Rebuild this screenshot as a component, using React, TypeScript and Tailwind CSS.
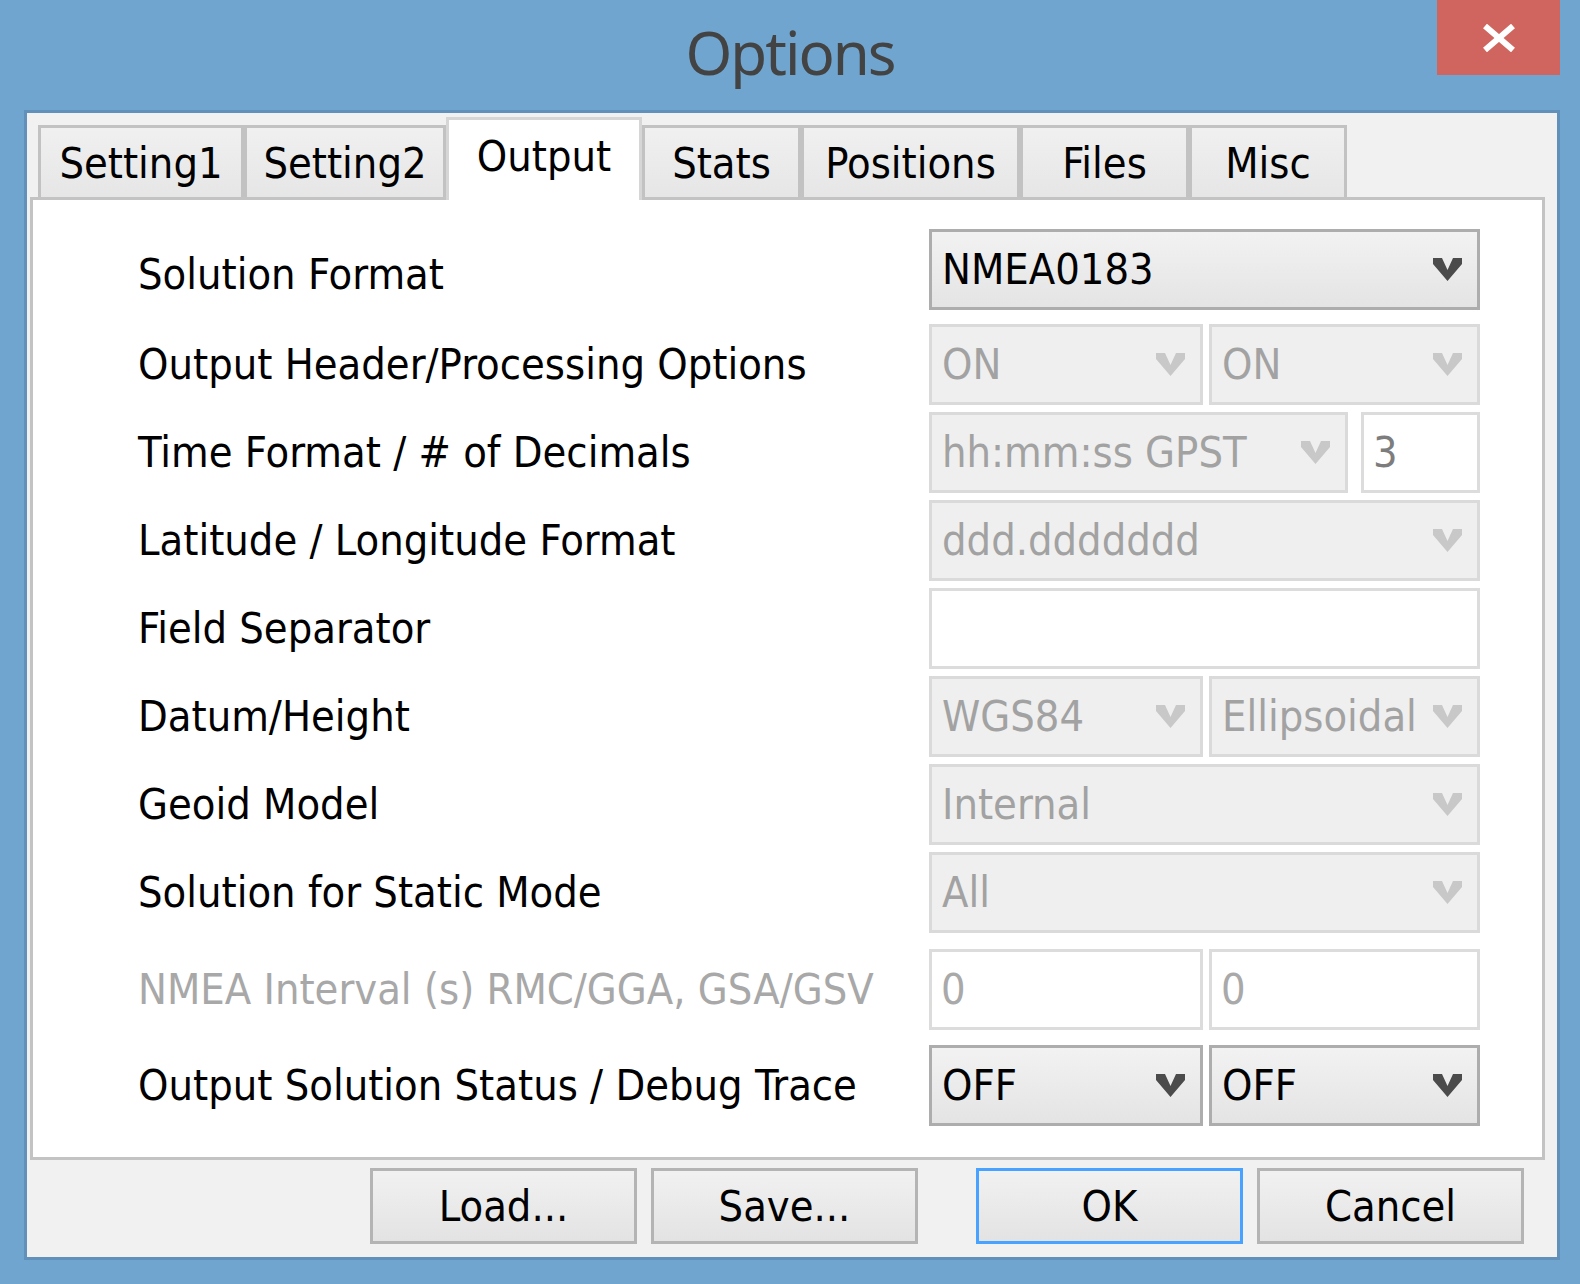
import clsx from 'clsx'

type Ctl =
  | { kind: 'combo'; value: string; enabled?: boolean; w: string }
  | { kind: 'edit'; value: string; w: string; muted?: boolean }

interface Row {
  label: string
  disabled?: boolean
  mt: string
  controls: Ctl[]
  gap?: string
  labelPad?: string
}

const tabs = [
  { label: 'Setting1', w: 'w-[206px]' },
  { label: 'Setting2', w: 'w-[202px]' },
  { label: 'Output', w: 'w-[196px]', active: true },
  { label: 'Stats', w: 'w-[159px]' },
  { label: 'Positions', w: 'w-[219px]' },
  { label: 'Files', w: 'w-[169px]' },
  { label: 'Misc', w: 'w-[158px]' },
]

const rows: Row[] = [
  {
    label: 'Solution Format',
    mt: 'mt-0',
    labelPad: 'pt-[10px]',
    controls: [{ kind: 'combo', value: 'NMEA0183', enabled: true, w: 'w-full' }],
  },
  {
    label: 'Output Header/Processing Options',
    mt: 'mt-[14px]',
    gap: 'gap-[6px]',
    controls: [
      { kind: 'combo', value: 'ON', w: 'w-[274px]' },
      { kind: 'combo', value: 'ON', w: 'w-[271px]' },
    ],
  },
  {
    label: 'Time Format / # of Decimals',
    mt: 'mt-[7px]',
    gap: 'gap-[13px]',
    controls: [
      { kind: 'combo', value: 'hh:mm:ss GPST', w: 'w-[419px]' },
      { kind: 'edit', value: '3', w: 'w-[119px]' },
    ],
  },
  { label: 'Latitude / Longitude Format', mt: 'mt-[7px]', controls: [{ kind: 'combo', value: 'ddd.ddddddd', w: 'w-full' }] },
  { label: 'Field Separator', mt: 'mt-[7px]', controls: [{ kind: 'edit', value: '', w: 'w-full' }] },
  {
    label: 'Datum/Height',
    mt: 'mt-[7px]',
    gap: 'gap-[6px]',
    controls: [
      { kind: 'combo', value: 'WGS84', w: 'w-[274px]' },
      { kind: 'combo', value: 'Ellipsoidal', w: 'w-[271px]' },
    ],
  },
  { label: 'Geoid Model', mt: 'mt-[7px]', controls: [{ kind: 'combo', value: 'Internal', w: 'w-full' }] },
  { label: 'Solution for Static Mode', mt: 'mt-[7px]', controls: [{ kind: 'combo', value: 'All', w: 'w-full' }] },
  {
    label: 'NMEA Interval (s) RMC/GGA, GSA/GSV',
    disabled: true,
    mt: 'mt-[16px]',
    gap: 'gap-[6px]',
    controls: [
      { kind: 'edit', value: '0', w: 'w-[274px]', muted: true },
      { kind: 'edit', value: '0', w: 'w-[271px]', muted: true },
    ],
  },
  {
    label: 'Output Solution Status / Debug Trace',
    mt: 'mt-[15px]',
    gap: 'gap-[6px]',
    controls: [
      { kind: 'combo', value: 'OFF', enabled: true, w: 'w-[274px]' },
      { kind: 'combo', value: 'OFF', enabled: true, w: 'w-[271px]' },
    ],
  },
]

function Chevron({ enabled }: { enabled?: boolean }) {
  return (
    <svg width="29" height="23" viewBox="0 0 29 23" className="shrink-0">
      <polygon
        points="0,0 9,0 14.5,12 20,0 29,0 29,6 14.5,23 0,6"
        fill={enabled ? '#4b4b4b' : '#c8c8c8'}
      />
    </svg>
  )
}

function Control({ ctl }: { ctl: Ctl }) {
  if (ctl.kind === 'edit') {
    return (
      <div
        className={clsx(
          'flex h-full items-center border-[3px] border-[#dcdcdc] bg-white pl-[9px]',
          ctl.muted ? 'text-[#a9a9a9]' : 'text-[#7d7d7d]',
          ctl.w,
        )}
      >
        {ctl.value}
      </div>
    )
  }
  return (
    <div
      className={clsx(
        'flex h-full items-center justify-between border-[3px] pl-[10px] pr-[15px]',
        ctl.enabled
          ? 'border-[#adadad] bg-gradient-to-b from-[#f2f2f2] to-[#e4e4e4] text-black'
          : 'border-[#dadada] bg-[#efefef] text-[#a2a2a2]',
        ctl.w,
      )}
    >
      <span className="whitespace-nowrap">{ctl.value}</span>
      <Chevron enabled={ctl.enabled} />
    </div>
  )
}

function Button({ label, primary }: { label: string; primary?: boolean }) {
  return (
    <button
      type="button"
      className={clsx(
        'flex h-[76px] w-[267px] items-center justify-center border-[3px] bg-gradient-to-b from-[#f1f1f1] to-[#e3e3e3] text-black',
        primary ? 'border-[#48a2ff]' : 'border-[#b4b4b4]',
      )}
    >
      {label}
    </button>
  )
}

export default function App() {
  return (
    <div className="flex h-[1284px] w-[1580px] flex-col bg-[#70a5cf] font-['DejaVu_Sans_Condensed','DejaVu_Sans',sans-serif] text-[43px]">
      <header className="relative flex h-[113px] shrink-0 justify-center pt-[12px]">
        <span className="font-['Noto_Sans',sans-serif] text-[60px] leading-[80px] tracking-[-2px] text-[#434343]">
          Options
        </span>
        <div className="absolute right-[20px] top-0 flex h-[75px] w-[123px] items-center justify-center bg-[#d0655f]">
          <svg width="34" height="28" viewBox="0 0 34 28">
            <path d="M3 2 L31 26 M31 2 L3 26" stroke="#ffffff" strokeWidth="6" />
          </svg>
        </div>
      </header>

      <div className="ml-[27px] mr-[23px] flex h-[1144px] flex-col bg-[#f1f1f1] shadow-[0_0_0_3px_#6191bb]">
        <div className="ml-[3px] mr-[12px] mt-[4px]">
          <div className="flex h-[80px] items-end pl-[8px]">
            {tabs.map((tab) =>
              tab.active ? (
                <div
                  key={tab.label}
                  className={clsx(
                    'relative z-10 -mb-[3px] flex h-[83px] items-center justify-center border-x-[3px] border-t-[3px] border-[#d6d6d6] bg-white pb-[8px] text-black',
                    tab.w,
                  )}
                >
                  {tab.label}
                </div>
              ) : (
                <div
                  key={tab.label}
                  className={clsx(
                    'flex h-[72px] items-center justify-center border-x-[3px] border-t-[3px] border-[#c2c2c2] bg-gradient-to-b from-[#f0f0f0] to-[#e6e6e6] pt-[2px] text-black',
                    tab.w,
                  )}
                >
                  {tab.label}
                </div>
              ),
            )}
          </div>

          <div className="h-[963px] border-[3px] border-[#c3c3c3] bg-white pl-[105px] pr-[62px] pt-[29px]">
            {rows.map((row) => (
              <div key={row.label} className={clsx('flex h-[81px] items-center', row.mt)}>
                <span
                  className={clsx(
                    'flex-1 whitespace-nowrap',
                    row.disabled ? 'text-[#a8a8a8]' : 'text-black',
                    row.labelPad,
                  )}
                >
                  {row.label}
                </span>
                <div className={clsx('flex h-full w-[551px] justify-between', row.gap)}>
                  {row.controls.map((ctl, i) => (
                    <Control key={i} ctl={ctl} />
                  ))}
                </div>
              </div>
            ))}
          </div>
        </div>

        <div className="mt-[8px] flex justify-end pr-[33px]">
          <div className="flex gap-[14px]">
            <Button label="Load..." />
            <Button label="Save..." />
          </div>
          <div className="ml-[58px] flex gap-[14px]">
            <Button label="OK" primary />
            <Button label="Cancel" />
          </div>
        </div>
      </div>
    </div>
  )
}
